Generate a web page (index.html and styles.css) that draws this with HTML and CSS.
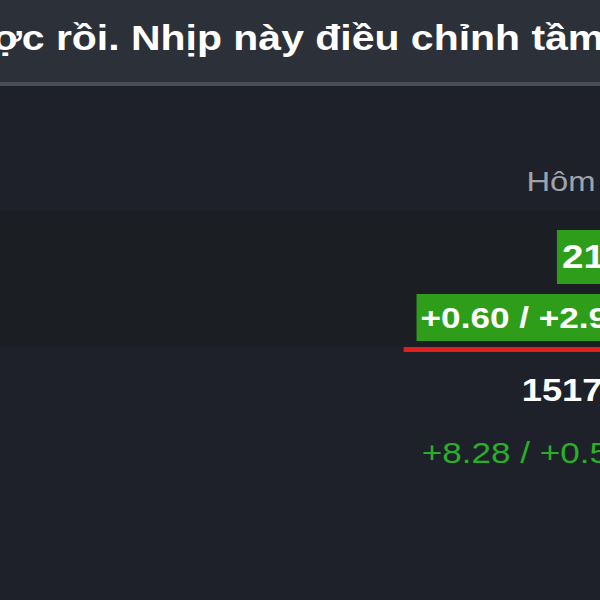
FILE: index.html
```html
<!DOCTYPE html>
<html lang="vi">
<head>
    <meta charset="UTF-8">
    <meta name="viewport" content="width=device-width, initial-scale=1.0">
    <title>Thảo luận cổ phiếu</title>
    <link rel="stylesheet" href="styles.css">
</head>
<body>

<div class="page">
    <!--Post title-->
    <div class="topbar">
        <h2 class="headline">được rồi. Nhịp này điều chỉnh tầm 20.5 - 21 là hợp lý</h2>
    </div>

    <!--Quote table-->
    <div class="quote-table">
        <div class="quote-head">
            <div class="label-col"></div>
            <div class="value-col">Hôm nay</div>
        </div>

        <div class="quote-row stock">
            <div class="label-col"></div>
            <div class="value-col active">
                <div class="line"><span class="price-box">21.00</span></div>
                <div class="line"><span class="change-box">+0.60 / +2.94%</span></div>
            </div>
        </div>

        <div class="quote-row index">
            <div class="label-col"></div>
            <div class="value-col">
                <div class="index-value">1517.24</div>
                <div class="index-change">+8.28 / +0.55%</div>
            </div>
        </div>
    </div>
</div>

</body>
</html>
```

FILE: styles.css
```css
body {
    margin: 0;
    background-color: #1e212a;
    overflow: hidden;
    font-family: "Liberation Sans", Arial, sans-serif;
}

.page {
    width: 575px;
    transform: scaleX(1.17);
    transform-origin: 0 0;
}

.topbar {
    height: 82px;
    background-color: #2c3038;
    border-bottom: 4px solid #4a4e56;
    overflow: hidden;
}

.headline {
    margin: 0;
    padding-top: 18px;
    font-size: 35px;
    line-height: 40px;
    font-weight: bold;
    color: #fff;
    white-space: nowrap;
    text-indent: -53px;
}

.quote-head,
.quote-row {
    display: grid;
    grid-template-columns: 345px 1fr;
}

.value-col {
    text-align: right;
    padding-right: 8px;
    white-space: nowrap;
}

.quote-head .value-col {
    padding-top: 80px;
    padding-right: 13px;
    padding-bottom: 12px;
    font-size: 28px;
    line-height: 32px;
    color: #9ea3ab;
}

.stock {
    background-color: #1b1e22;
}

.stock .value-col {
    padding-top: 20px;
    padding-bottom: 6px;
    margin-bottom: -5px;
    border-bottom: 5px solid #e0201c;
}

.line + .line {
    margin-top: 10px;
}

.price-box,
.change-box {
    display: inline-block;
    background-color: #2e9e1a;
    color: #fff;
    font-weight: bold;
}

.price-box {
    height: 54px;
    line-height: 54px;
    font-size: 33px;
    padding: 0 4px;
    vertical-align: top;
}

.change-box {
    height: 47px;
    line-height: 47px;
    font-size: 30px;
    padding: 0 4px;
    vertical-align: top;
}

.index .value-col {
    padding-top: 26px;
}

.index-value {
    margin-right: 9px;
    font-size: 31px;
    line-height: 36px;
    font-weight: bold;
    color: #fff;
}

.index-change {
    margin-top: 26px;
    margin-right: 3px;
    font-size: 30px;
    line-height: 36px;
    color: #2aae2a;
}
```
